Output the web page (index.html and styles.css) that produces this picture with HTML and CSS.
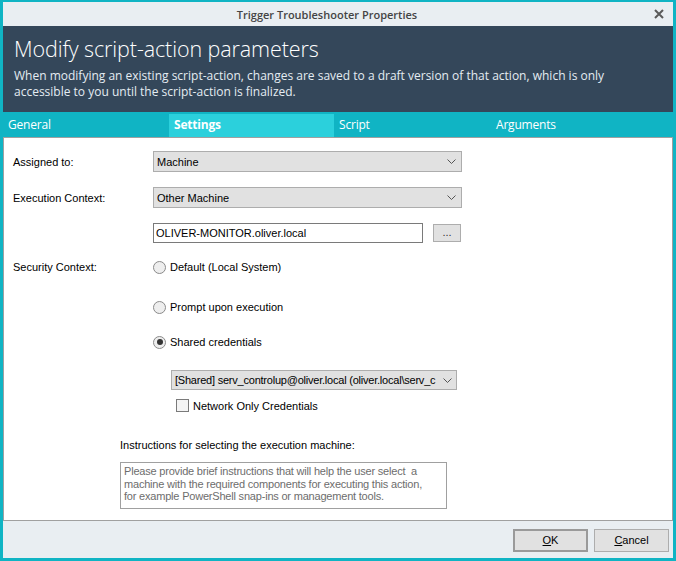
FILE: index.html
```html
<!DOCTYPE html>
<html>
<head>
<meta charset="utf-8">
<link rel="stylesheet" href="styles.css">
</head>
<body>
<div class="window">
  <div class="titlebar">
    <span class="title">Trigger Troubleshooter Properties</span>
    <svg class="close" width="10" height="10" viewBox="0 0 10 10"><path d="M1 1 L9 9 M9 1 L1 9" stroke="#5a5a5a" stroke-width="2" fill="none"/></svg>
  </div>
  <div class="header">
    <div class="h-title">Modify script-action parameters</div>
    <div class="h-desc">When modifying an existing script-action, changes are saved to a draft version of that action, which is only<br>accessible to you until the script-action is finalized.</div>
  </div>
  <div class="tabs">
    <div class="tab t1">General</div>
    <div class="tab t2 active">Settings</div>
    <div class="tab t3">Script</div>
    <div class="tab t4">Arguments</div>
  </div>
  <div class="content">
    <div class="row r1">
      <div class="label">Assigned to:</div>
      <div class="combo w309"><span class="ctext">Machine</span><svg class="chev" width="9" height="5" viewBox="0 0 9 5"><path d="M0.5 0.5 L4.5 4.5 L8.5 0.5" stroke="#555" stroke-width="1" fill="none"/></svg></div>
    </div>
    <div class="row r2">
      <div class="label">Execution Context:</div>
      <div class="combo w309"><span class="ctext">Other Machine</span><svg class="chev" width="9" height="5" viewBox="0 0 9 5"><path d="M0.5 0.5 L4.5 4.5 L8.5 0.5" stroke="#555" stroke-width="1" fill="none"/></svg></div>
    </div>
    <div class="row r3">
      <div class="label"></div>
      <div class="textbox">OLIVER-MONITOR.oliver.local</div>
      <div class="dots">...</div>
    </div>
    <div class="row r4">
      <div class="label">Security Context:</div>
      <div class="radio"><span class="rb"></span><span>Default (Local System)</span></div>
    </div>
    <div class="row r5">
      <div class="label"></div>
      <div class="radio"><span class="rb"></span><span>Prompt upon execution</span></div>
    </div>
    <div class="row r6">
      <div class="label"></div>
      <div class="radio"><span class="rb on"></span><span>Shared credentials</span></div>
    </div>
    <div class="row r7">
      <div class="combo w286"><span class="ctext tight">[Shared] serv_controlup@oliver.local (oliver.local\serv_c</span><svg class="chev" width="9" height="5" viewBox="0 0 9 5"><path d="M0.5 0.5 L4.5 4.5 L8.5 0.5" stroke="#555" stroke-width="1" fill="none"/></svg></div>
    </div>
    <div class="row r8">
      <span class="cb"></span><span>Network Only Credentials</span>
    </div>
    <div class="instr">Instructions for selecting the execution machine:</div>
    <div class="notes">Please provide brief instructions that will help the user select&nbsp; a<br>machine with the required components for executing this action,<br>for example PowerShell snap-ins or management tools.</div>
  </div>
  <div class="footer">
    <div class="btn default"><u>O</u>K</div>
    <div class="btn"><u>C</u>ancel</div>
  </div>
</div>
</body>
</html>
```
FILE: styles.css
```css
* { box-sizing: border-box; }
html, body { margin: 0; padding: 0; }
body { width: 676px; height: 561px; overflow: hidden; }
.window {
  width: 676px; height: 561px;
  background: #10b4c4;
  padding: 2px 3px 3px 3px;
  display: flex; flex-direction: column;
  font-family: "Liberation Sans", Arial, sans-serif;
  font-size: 11px; color: #000;
}
.titlebar {
  height: 24px; flex: none;
  background: #e9eef2;
  position: relative;
  display: flex; align-items: center; justify-content: center;
  padding-right: 22px;
}
.title {
  font-family: "Open Sans", sans-serif; font-weight: 600; font-size: 11px; color: #444;
}
.close { position: absolute; right: 9px; top: 7px; }
.header {
  height: 86px; flex: none;
  background: #34475a;
  color: #fff;
  padding: 9px 0 0 11px;
}
.h-title {
  font-family: "Open Sans", sans-serif; font-weight: 300;
  font-size: 21.5px; line-height: 28px; letter-spacing: -0.1px;
}
.h-desc {
  font-family: "Open Sans", sans-serif; font-size: 12px; line-height: 16px;
  color: #e4ecf2; margin-top: 5px; letter-spacing: 0;
}
.tabs {
  height: 25px; flex: none; display: flex; align-items: flex-end;
  font-family: "Open Sans", sans-serif; font-size: 12px; color: #fff;
}
.tab { height: 23px; padding-left: 5px; line-height: 22px; letter-spacing: -0.2px; }
.t1 { width: 166px; }
.t2 { width: 165px; }
.t3 { width: 157px; }
.t4 { flex: 1; }
.tab.active { background: #2bd0dc; font-weight: 700; }
.content {
  flex: 1;
  background: #fff;
  border: 1px solid #a0a0a0;
  padding-left: 9px;
}
.row { display: flex; align-items: center; }
.label { width: 140px; flex: none; }
.r1 { margin-top: 13px; }
.r2 { margin-top: 15px; }
.r3 { margin-top: 15px; }
.r4 { margin-top: 17px; }
.r5 { margin-top: 26px; }
.r6 { margin-top: 21px; }
.r7 { margin-top: 21px; padding-left: 158px; }
.r8 { margin-top: 9px; padding-left: 163px; }
.combo {
  height: 21px; background: #e1e1e1; border: 1px solid #adadad;
  display: flex; align-items: center; padding-left: 3px; padding-right: 5px;
}
.w309 { width: 309px; }
.w286 { width: 286px; height: 20px; padding-right: 4px; }
.ctext { flex: 1; white-space: nowrap; overflow: hidden; }
.ctext.tight { letter-spacing: -0.22px; }
.chev { flex: none; margin-left: 4px; }
.w286 .chev { margin-left: 2px; }
.textbox {
  width: 270px; height: 20px; border: 1px solid #7a7a7a; background: #fff;
  padding-left: 2px; line-height: 18px;
}
.dots {
  width: 28px; height: 18px; margin-left: 10px; background: #e1e1e1; border: 1px solid #adadad;
  text-align: center; line-height: 14px; color: #333;
}
.radio { display: flex; align-items: center; height: 14px; }
.rb {
  width: 13px; height: 13px; border-radius: 50%; border: 1px solid #8a8a8a;
  background: #eeeeee; margin-right: 4px; position: relative; flex: none;
}
.rb.on::after {
  content: ""; position: absolute; left: 2.5px; top: 2.5px; width: 6px; height: 6px; border-radius: 50%; background: #333;
}
.cb {
  width: 13px; height: 13px; border: 1px solid #7a7a7a; background: #f4f4f4; margin-right: 4px; flex: none;
}
.instr { margin-top: 27px; padding-left: 107px; line-height: 13px; }
.notes {
  margin-top: 10px; margin-left: 107px; width: 327px; height: 47px;
  border: 1px solid #a0a0a0; color: #6d6d6d;
  padding: 2px 0 0 3px; line-height: 12.7px; font-size: 11px; letter-spacing: -0.2px;
}
.footer {
  height: 37px; flex: none; background: #e9eef2;
  display: flex; justify-content: flex-end; align-items: flex-start;
  padding: 8px 4px 0 0; gap: 6px;
}
.btn {
  width: 75px; height: 23px; border: 1px solid #adadad; background: #e1e1e1;
  text-align: center; line-height: 21px;
}
.btn.default { border: 2px solid #9a9a9a; line-height: 19px; }
```
